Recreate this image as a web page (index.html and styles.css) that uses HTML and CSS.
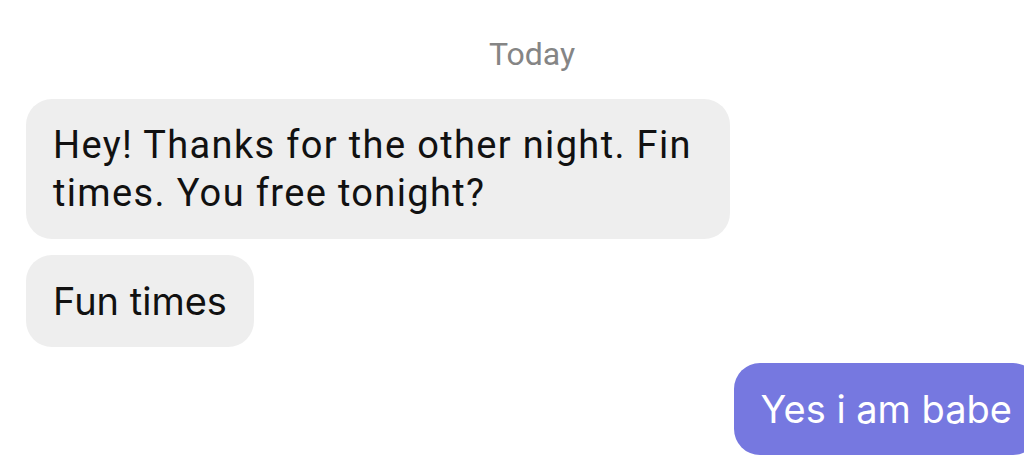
FILE: index.html
```html
<!DOCTYPE html>
<html>
<head>
<meta charset="utf-8">
<link rel="stylesheet" href="styles.css">
</head>
<body>
<div class="chat">
  <div class="day">Today</div>
  <div class="bubble in wide">Hey! Thanks for the other night. Fin<br>times. You free tonight?</div>
  <div class="bubble in">Fun times</div>
  <div class="bubble out">Yes i am babe</div>
</div>
</body>
</html>
```
FILE: styles.css
```css
html, body {
  margin: 0;
  padding: 0;
  background: #ffffff;
  overflow: hidden;
}
.chat {
  width: 1024px;
  height: 458px;
  box-sizing: border-box;
  padding: 30px 0 0 26px;
  display: flex;
  flex-direction: column;
  align-items: flex-start;
  gap: 16px;
  font-family: Inter, Roboto, "Liberation Sans", sans-serif;
}
.day {
  align-self: stretch;
  text-align: center;
  font-family: Roboto, "Liberation Sans", sans-serif;
  margin-left: 14px;
  font-size: 32px;
  line-height: 48px;
  color: #858585;
  margin-bottom: 5px;
}
.bubble {
  font-size: 38px;
  line-height: 48px;
  padding: 22px 27px;
  border-radius: 26px;
  color: #111111;
}
.in {
  background: #eeeeee;
}
.wide {
  font-family: Roboto, "Liberation Sans", sans-serif;
  font-size: 38px;
  letter-spacing: 1.35px;
  line-height: 48px;
  width: 650px;
}
.out {
  align-self: flex-end;
  margin-right: -15px;
  background: #7678e0;
  color: #ffffff;
}
```
